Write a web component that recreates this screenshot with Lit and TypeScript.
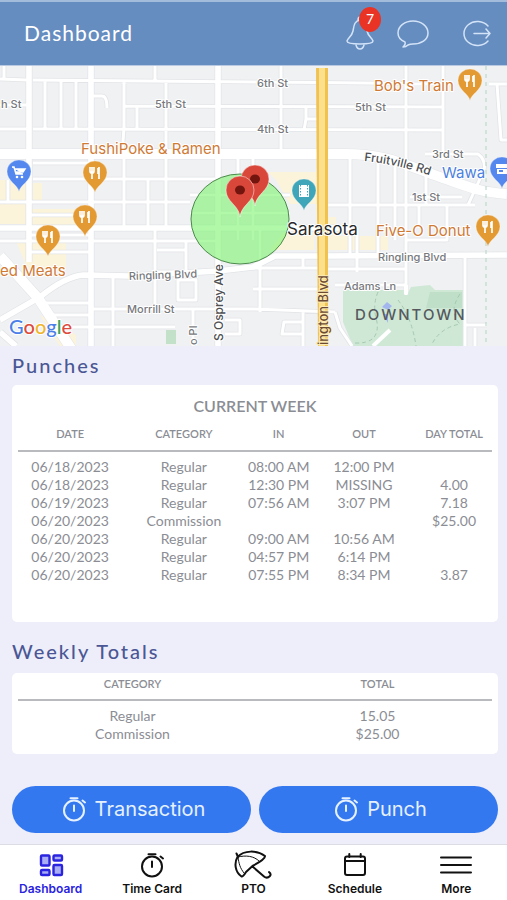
import { LitElement, html, svg, css } from "lit";
import { customElement, property } from "lit/decorators.js";

type Punch = [date: string, category: string, timeIn: string, timeOut: string, total: string];

const PUNCHES: Punch[] = [
  ["06/18/2023", "Regular", "08:00 AM", "12:00 PM", ""],
  ["06/18/2023", "Regular", "12:30 PM", "MISSING", "4.00"],
  ["06/19/2023", "Regular", "07:56 AM", "3:07 PM", "7.18"],
  ["06/20/2023", "Commission", "", "", "$25.00"],
  ["06/20/2023", "Regular", "09:00 AM", "10:56 AM", ""],
  ["06/20/2023", "Regular", "04:57 PM", "6:14 PM", ""],
  ["06/20/2023", "Regular", "07:55 PM", "8:34 PM", "3.87"],
];

const TOTALS: [string, string][] = [
  ["Regular", "15.05"],
  ["Commission", "$25.00"],
];

/* Streets grouped by drawn width. */
const LANES =
  "M0 79L27 80M33 80L320 82.500L450 84M0 105H27M125 106L443 107M33 129L443 130M0 129H27" +
  "M45 81V129M61 81V129M76 81V129M155 66V80M124 82V128L122 154M137 106V129M166 82V230M92 96H102Q107 96 107 108" +
  "M33 163H91M33 179H215M0 202H190M124 154V228M148 180V228M166 154V228M8 180V202M4 66V79" +
  "M30 215H90M30 235H90M0 241H218M30 252H90M155 228V305M186 240V272M157 250H186M157 272H200" +
  "M90 309H253L335 312M40 303H90M48 315H90M55 327H90M92 327H175M113 276V346M193 309V346M178 280H196V300H178Z" +
  "M225 320H240V334H225M281 66V154M406 66V295M443 66V160M306 107V119L304 130M306 119H318" +
  "M350 154V254M378 154V254M426 165V204M410 197H462M425 154H478Q486 160 484 170L468 205" +
  "M328 205H475M357 228V272M395 160V240M447 205V240H406M419 205V228M489 84H507M497 84L501 140H507" +
  "M260 228V312M303 255V268M325 269H406M253 268H318M253 289H320M335 285H405M303 312V346M303 322H284L282 334H303" +
  "M465 256V346M465 325H487M335 312L340 328L352 346M475 328V346M238 154V240M253 154V240M190 195H290M190 213H290";
const STREETS =
  "M29 66V262M91 66V346M218 66V346M0 228H318M328 228H350M0 320L40 297Q66 276 84 275L130 276L218 271L253 267L275 256H320L507 255" +
  "M0 332L16 346";
const AVENUES = "M0 154H340C385 153 405 165 440 177S480 192 507 194M0 256L38 298L72 350";

type PlacePin = [x: number, y: number, fill: string, glyph: "food" | "cart" | "film" | "shop"];
const PINS: PlacePin[] = [
  [95, 173, "#e39a33", "food"],
  [85, 217, "#e39a33", "food"],
  [48, 237, "#e39a33", "food"],
  [470, 81, "#e39a33", "food"],
  [488, 227, "#e39a33", "food"],
  [19, 172, "#5588ee", "cart"],
  [304, 191, "#3fa5b9", "film"],
  [502, 169, "#5588ee", "shop"],
];

const GLYPHS = {
  food: svg`<path d="M-5-6V-2Q-5 0-3 0V6M-3-6V0M-1-6V-2Q-1 0-3 0M4-6V6M3-5V1" fill="none" stroke="#fff" stroke-width="1.700"/>`,
  cart: svg`<path d="M-7-5H-5L-3 2H4M-4-3H6L4 0H-3" fill="#fff" stroke="#fff" stroke-width="1.500"/><circle cx="-2" cy="5" r="1.300" fill="#fff"/><circle cx="3" cy="5" r="1.300" fill="#fff"/>`,
  film: svg`<path d="M-5-6H5V6H-5Z" fill="#fff"/><path d="M-3.500-6V6M3.500-6V6" stroke="#3fa5b9" stroke-width="1" stroke-dasharray="1.500 1.500"/>`,
  shop: svg`<path d="M-6-5H6V-1H-6ZM-5 0H5V5H-5Z" fill="#fff"/><path d="M-3 1H1V3H-3Z" fill="#5588ee"/>`,
};

@customElement("site-map")
class SiteMap extends LitElement {
  static styles = css`
    :host { display: block; }
    svg { display: block; width: 100%; height: auto; background: #f0f1f3; }
    text { font-family: Inter, "Liberation Sans", sans-serif; }
    .halo { paint-order: stroke; stroke: #fff; stroke-width: 2px; stroke-linejoin: round; }
    .street { font-size: 11px; fill: #77797d; font-weight: 500; }
    .road { font-size: 12px; fill: #4d4f53; font-weight: 500; }
    .highway { font-size: 13px; fill: #6b4a2f; stroke: #fdebb5; font-weight: 500; }
    .place { font-size: 15px; fill: #cf7a35; }
    .shop { font-size: 15px; fill: #4c7fe0; }
    .city { font-size: 17px; fill: #28292b; }
    .area { font-size: 15px; fill: #55595e; letter-spacing: 2px; font-weight: 500; }
    .logo { font: 500 20px Lato, sans-serif; }
  `;

  render() {
    const roads = (casing: boolean) => svg`
      <g fill="none" stroke=${casing ? "#e2e4e7" : "#fff"} stroke-linejoin="round">
        <path d=${LANES} stroke-width=${casing ? 4.6 : 3} />
        <path d=${STREETS} stroke-width=${casing ? 7 : 5.6} />
        <path d=${AVENUES} stroke-width=${casing ? 11 : 10} />
      </g>`;
    return html`
      <svg viewBox="0 66 507 280" role="img" aria-label="Map of Sarasota">
        <path d="M0 180H26V224H0ZM33 183H42V201H33ZM30 209H88V226H30ZM16 241H66V270H28ZM268 172H316L318 204H290L276 180ZM284 232H314V250H270ZM328 228V217H336V236H388V250H328ZM40 315L76 335V346H60Z" fill="#fbf3da"/>
        <path d="M343 290H405L407 295L411 287L430 285L435 290H463V346H353L343 322Z" fill="#cfe8d6"/>
        <path d="M430 292H462V308H426Z" fill="#bfdfc9"/>
        ${roads(true)} ${roads(false)}
        <path d="M166 330H176V344H166Z" fill="#c3e0c9"/>
        <path d="M406 285V294M390 330L373 346" stroke="#fff" stroke-width="4"/>
        <path d="M486 66V346" stroke="#b4d3c4" stroke-width="1" stroke-dasharray="4 4"/>
        <path d="M398 300Q412 318 416 346M460 294Q448 312 460 324Q440 328 432 344M378 292Q372 306 377 322Q380 344 355 343" fill="none" stroke="#a5c9b0" stroke-width="1" stroke-dasharray="4 3"/>
        <path d="M316 68H328V346H318Z" fill="#f0c251"/>
        <path d="M319 68H325V346H319Z" fill="#fce08c"/>
        <path d="M387 302L392 306L388 310L382 307ZM383 314H388V323Z" fill="#a3b7ee"/>

        <ellipse cx="240" cy="219" rx="49" ry="45" fill="#7df37099" stroke="#4c8a4c" stroke-width="1"/>

        <text class="street halo" x="257" y="87">6th St</text>
        <text class="street halo" x="155" y="108">5th St</text>
        <text class="street halo" x="1" y="108">h St</text>
        <text class="street halo" x="355" y="111">5th St</text>
        <text class="street halo" x="257" y="133">4th St</text>
        <text class="street halo" x="432" y="158">3rd St</text>
        <text class="street halo" x="412" y="201">1st St</text>
        <text class="street halo" x="129" y="280" transform="rotate(-2 129 280)">Ringling Blvd</text>
        <text class="street halo" x="378" y="261">Ringling Blvd</text>
        <text class="street halo" x="127" y="313">Morrill St</text>
        <text class="street halo" x="344" y="290">Adams Ln</text>
        <text class="street halo" transform="translate(197 345) rotate(-90)">o Pl</text>
        <text class="road halo" transform="translate(223 341) rotate(-90)">S Osprey Ave</text>
        <text class="halo highway" transform="translate(328 345) rotate(-90)">ington Blvd</text>
        <path id="fruitville" d="M364 161Q404 165 442 180" fill="none"/>
        <text class="road halo"><textPath href="#fruitville">Fruitville Rd</textPath></text>

        ${PINS.map(
          ([x, y, fill, glyph]) => svg`
          <g transform="translate(${x} ${y})">
            <path d="M0 19.500C-1 13-12 9-12-0.500A12 11.500 0 0 1 12-0.500C12 9 1 13 0 19.500Z" fill=${fill} stroke="#fff" stroke-opacity="0.500" stroke-width="0.600"/>
            ${GLYPHS[glyph]}
          </g>`
        )}
        ${[[255, 179], [240, 190]].map(
          ([x, y]) => svg`
          <g transform="translate(${x} ${y})">
            <path d="M0 27C-1 15-14 12-14 0A14 14 0 0 1 14 0C14 12 1 15 0 27Z" fill="#d9473b" stroke="#fff" stroke-opacity="0.600" stroke-width="0.800"/>
            <ellipse rx="5" ry="4.500" fill="#73150f"/>
          </g>`
        )}

        <text class="place halo" x="81" y="154">FushiPoke &amp; Ramen</text>
        <text class="place halo" x="374" y="91">Bob's Train</text>
        <text class="place halo" x="376" y="236">Five-O Donut</text>
        <text class="place halo" x="0" y="276">ed Meats</text>
        <text class="shop halo" x="442" y="178">Wawa</text>
        <text class="city halo" x="287" y="235">Sarasota</text>
        <text class="area" x="355" y="320">DOWNTOWN</text>
        <text class="logo halo" x="9" y="334"><tspan fill="#4a80e8">G</tspan><tspan fill="#dd4b3e">o</tspan><tspan fill="#efb52d">o</tspan><tspan fill="#4a80e8">g</tspan><tspan fill="#3aa457">l</tspan><tspan fill="#dd4b3e">e</tspan></text>
      </svg>`;
  }
}

const ICONS = {
  bell: svg`<path d="M15 7C9 8 9 13 8 18C7 23 3 25 2 28C2 30 8 31 15 31S28 30 28 28C27 25 23 23 22 18C21 13 21 8 15 7ZM13 7Q13 4 15 4T17 7M11 32Q12 36 15 36T19 32" />`,
  chat: svg`<path d="M15 8C23 8 30 13 30 20S23 31 15 31Q12 31 10 32Q8 34 5 34Q8 31 7 29Q0 26 0 20C0 13 7 8 15 8Z" />`,
  exit: svg`<path d="M26 13A13.500 12 0 1 0 26 28M12 20.500H28M24 16L28 20.500L24 25" />`,
  timer: svg`<circle cx="19" cy="16.500" r="10"/><path d="M15.500 4.200H22.500M19 11.500V17M27.500 6.500L30 8.500" />`,
  dashboard: svg`<g fill="#a9adf4" stroke-width="2.400"><rect x="9" y="5.500" width="8.500" height="10" rx="1"/><rect x="21.500" y="5.500" width="8.500" height="5" rx="1"/><rect x="9" y="20" width="8.500" height="5" rx="1"/><rect x="21.500" y="15" width="8.500" height="10" rx="1"/></g>`,
  umbrella: svg`<path d="M7.500 26.500C1 22 0 13 3.500 7C10 0 23 0 31 6Q31.500 9 18.500 16L12 22Q9 27 7.500 26.500ZM2.500 3.500L4 7M18.500 16.500L30 26.500Q33 29 36 26Q37.500 24 35 22"/><path d="M4 7C5 14 6 18 10 23M4 7C12 5 20 6 25 11" stroke-width="1"/>`,
  calendar: svg`<rect x="9" y="6.500" width="20" height="18.500" rx="2"/><path d="M9 11H29M13.300 4V7M24.700 4V7" />`,
  more: svg`<path d="M4 7.500H34M4 15H34M4 22.500H34" />`,
};
type IconName = keyof typeof ICONS;

const navIcon = (name: IconName) =>
  html`<svg class="icon" viewBox="0 0 38 30" aria-hidden="true">${ICONS[name]}</svg>`;
const barIcon = (name: IconName) =>
  html`<svg class="bar-icon" viewBox="-1 0 32 40" aria-hidden="true">${ICONS[name]}</svg>`;

const NAV: [string, IconName][] = [
  ["Dashboard", "dashboard"],
  ["Time Card", "timer"],
  ["PTO", "umbrella"],
  ["Schedule", "calendar"],
  ["More", "more"],
];

@customElement("app-root")
class AppRoot extends LitElement {
  @property() current = "Dashboard";

  static styles = css`
    :host {
      display: flex;
      flex-direction: column;
      min-height: 100vh;
      background: #eeeefa;
      color: #8b8d94;
      font-family: Lato, "Open Sans", sans-serif;
    }
    * { box-sizing: border-box; }
    svg { fill: none; stroke: currentColor; stroke-linecap: round; stroke-linejoin: round; }
    button { border: 0; background: none; padding: 0; font: inherit; color: inherit; cursor: pointer; }

    .bar {
      display: flex;
      align-items: center;
      justify-content: space-between;
      height: 66px;
      padding: 0 14px 2px 24px;
      background: #668dbf;
      border-top: 2px solid #a3bcdc;
      border-bottom: 1px solid #b9c9e2;
      color: #fff;
    }
    .bar h1 { margin: 0; font-size: 21px; line-height: 28px; font-weight: 400; letter-spacing: 1px; }
    .tools { display: flex; }
    .tools button { position: relative; color: #d3e3f8; }
    .tools button:nth-child(1) { margin-right: 21px; }
    .tools button:nth-child(2) { margin-right: 32px; }
    .bar-icon { display: block; width: 32px; height: 40px; stroke-width: 1.5; }
    .badge {
      position: absolute;
      left: 15px;
      top: -6px;
      width: 22px;
      height: 25px;
      border-radius: 50%;
      background: #e93325;
      color: #fff;
      font-size: 14px;
      line-height: 24px;
      text-align: center;
    }

    main { display: flex; flex-direction: column; flex: 1; padding: 0 9px 11px 12px; }
    h2 { margin: 0; font-size: 20px; line-height: 24px; font-weight: 500; letter-spacing: 2px; color: #4b5795; }
    .punches-title { padding: 7px 0 8px; }
    .totals-title { padding: 17px 0 10px; }
    .card { background: #fff; border-radius: 5px; padding: 0 6px; }
    .punches { padding-bottom: 38px; }
    .totals { padding-bottom: 11px; }
    table { width: 100%; border-collapse: collapse; table-layout: fixed; }
    caption { padding: 10px 0 6px; font-size: 16px; line-height: 22px; font-weight: 600; }
    th { padding: 0 0 5px; font-size: 11px; line-height: 22px; font-weight: 600; white-space: nowrap; }
    td { padding: 0; font-size: 14px; line-height: 18px; height: 18px; text-align: center; }
    thead tr { border-bottom: 2px solid #b9babe; }
    .totals th { padding-bottom: 4px; }
    tbody tr:first-child td { padding-top: 6px; }
    .c-date { width: 22%; }
    .c-category { width: 26%; }
    .c-in { width: 14%; }
    .c-out { width: 22%; }
    .c-total { width: 16%; }
    .totals th:first-child, .totals td:first-child { padding-right: 8px; }
    .totals th:last-child, .totals td:last-child { padding-left: 8px; }

    .actions { display: flex; gap: 8px; margin-top: auto; padding-top: 32px; }
    .actions button {
      display: flex;
      flex: 1;
      align-items: center;
      justify-content: center;
      height: 47px;
      padding: 0 3px 2px 0;
      border-radius: 24px;
      background: #3478f0;
      color: #e6f1ff;
      font: 400 20px Inter, "Liberation Sans", sans-serif;
    }
    .icon { display: block; width: 38px; height: 30px; stroke-width: 2; }
    .actions .icon { margin-right: 2px; }

    nav {
      display: grid;
      grid-template-columns: repeat(5, 1fr);
      height: 56px;
      background: #fff;
      border-top: 1px solid #dcdce4;
    }
    nav a {
      display: flex;
      flex-direction: column;
      align-items: center;
      padding-top: 5px;
      color: #111;
      text-decoration: none;
      font: 600 12px/18px Inter, "Liberation Sans", sans-serif;
    }
    nav a.current { color: #2a23e0; }
  `;

  render() {
    return html`
      <header class="bar">
        <h1>Dashboard</h1>
        <div class="tools">
          <button aria-label="Notifications">${barIcon("bell")}<span class="badge">7</span></button>
          <button aria-label="Messages">${barIcon("chat")}</button>
          <button aria-label="Sign out">${barIcon("exit")}</button>
        </div>
      </header>
      <site-map></site-map>
      <main>
        <h2 class="punches-title">Punches</h2>
        <section class="card punches">
          <table>
            <caption>CURRENT WEEK</caption>
            <thead>
              <tr>
                <th class="c-date" scope="col">DATE</th>
                <th class="c-category" scope="col">CATEGORY</th>
                <th class="c-in" scope="col">IN</th>
                <th class="c-out" scope="col">OUT</th>
                <th class="c-total" scope="col">DAY TOTAL</th>
              </tr>
            </thead>
            <tbody>
              ${PUNCHES.map((row) => html`<tr>${row.map((cell) => html`<td>${cell}</td>`)}</tr>`)}
            </tbody>
          </table>
        </section>
        <h2 class="totals-title">Weekly Totals</h2>
        <section class="card totals">
          <table>
            <thead>
              <tr><th scope="col">CATEGORY</th><th scope="col">TOTAL</th></tr>
            </thead>
            <tbody>
              ${TOTALS.map((row) => html`<tr>${row.map((cell) => html`<td>${cell}</td>`)}</tr>`)}
            </tbody>
          </table>
        </section>
        <div class="actions">
          <button>${navIcon("timer")}Transaction</button>
          <button>${navIcon("timer")}Punch</button>
        </div>
      </main>
      <nav aria-label="Main">
        ${NAV.map(
          ([label, icon]) => html`
          <a href="#" class=${label === this.current ? "current" : ""}>${navIcon(icon)}${label}</a>`
        )}
      </nav>
    `;
  }
}
